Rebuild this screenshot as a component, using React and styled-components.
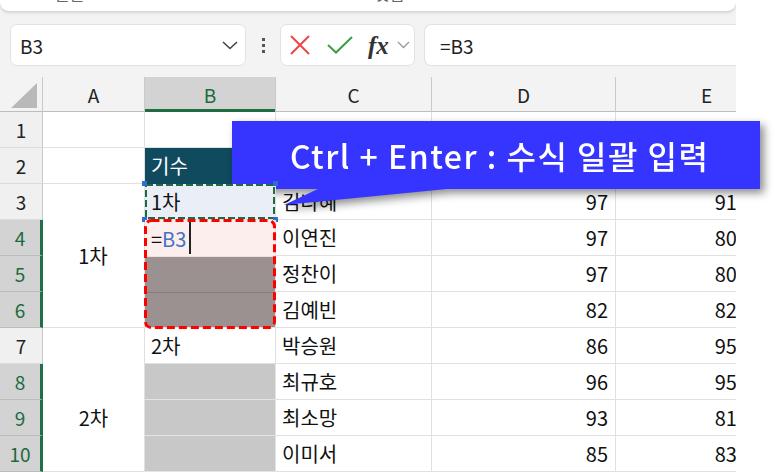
import React from 'react';
import styled, { createGlobalStyle } from 'styled-components';

const GlobalStyle = createGlobalStyle`
  html, body {
    margin: 0;
    padding: 0;
    background: #fff;
  }
  body {
    font-family: "Noto Sans CJK KR", "Noto Sans", sans-serif;
    overflow: hidden;
  }
`;

const Page = styled.div`
  position: relative;
  width: 778px;
  height: 472px;
  overflow: hidden;
  background: #fff;
`;

const Excel = styled.div`
  width: 736px;
  height: 472px;
  background: #f3f3f3;
  overflow: hidden;
  display: flex;
  flex-direction: column;
`;

const RibbonEdge = styled.div`
  position: relative;
  z-index: 1;
  flex: none;
  height: 11px;
  background: #fff;
  border-radius: 0 0 9px 9px;
  box-shadow: 0 2px 3px rgba(0, 0, 0, 0.13);
  overflow: hidden;
  display: flex;
  align-items: flex-start;
`;

RibbonEdge.Label = styled.span`
  margin-top: -16px;
  margin-left: ${(p) => p.$gap}px;
  font-size: 16px;
  line-height: 18px;
  color: #666;
  white-space: nowrap;
`;

const FormulaBar = styled.div`
  flex: none;
  display: flex;
  align-items: center;
  height: 42px;
  margin-top: 13px;
  padding-left: 10px;
`;

const NameBox = styled.div`
  box-sizing: border-box;
  width: 236px;
  height: 42px;
  background: #fff;
  border: 1px solid #e2e2e2;
  border-radius: 7px;
  display: flex;
  align-items: center;
  justify-content: space-between;
  padding: 0 7px 0 9px;
  font-size: 19px;
  color: #222;
`;

const Dots = styled.div`
  width: 34px;
  display: flex;
  flex-direction: column;
  align-items: center;
  gap: 3px;

  span {
    width: 3px;
    height: 3px;
    background: #555;
  }
`;

const FxBox = styled.div`
  box-sizing: border-box;
  width: 135px;
  height: 42px;
  background: #fff;
  border: 1px solid #e2e2e2;
  border-radius: 7px;
  display: flex;
  align-items: center;
  padding-left: 9px;
`;

const FxLabel = styled.span`
  font-family: "Liberation Serif", serif;
  font-style: italic;
  font-weight: bold;
  font-size: 25px;
  color: #333;
  margin-left: 15px;
  line-height: 1;
`;

const FormulaInput = styled.div`
  box-sizing: border-box;
  flex: 1;
  height: 42px;
  margin-left: 9px;
  background: #fff;
  border: 1px solid #e2e2e2;
  border-right: none;
  border-radius: 7px 0 0 7px;
  display: flex;
  align-items: center;
  padding-left: 15px;
  font-size: 19px;
  color: #222;
`;

const HeaderGap = styled.div`
  flex: none;
  height: 11px;
`;

const Sheet = styled.div`
  flex: none;
  display: grid;
  grid-template-columns: 43px 102px 131px 156px 184px 182px;
  grid-template-rows: 35px repeat(10, 36px);
  background: #fff;
`;

const Corner = styled.div`
  background: #f3f3f3;
  border-right: 1px solid #c9c9c9;
  box-shadow: inset 0 -1px 0 #bdbdbd;
  display: flex;
  align-items: flex-end;
  justify-content: flex-end;
  padding: 0 5px 4px 0;
`;

const ColHead = styled.div`
  box-sizing: border-box;
  display: flex;
  align-items: center;
  justify-content: center;
  background: ${(p) => (p.$active ? '#d3d3d3' : '#f3f3f3')};
  color: ${(p) => (p.$active ? '#1d6a40' : '#222')};
  border-right: 1px solid #c9c9c9;
  box-shadow: ${(p) => (p.$active ? 'inset 0 -3px 0 #1e6e42' : 'inset 0 -1px 0 #bdbdbd')};
  font-size: 19px;
`;

const RowHead = styled.div`
  box-sizing: border-box;
  display: flex;
  align-items: center;
  justify-content: center;
  background: ${(p) => (p.$active ? '#d3d3d3' : '#f0f0f0')};
  color: ${(p) => (p.$active ? '#1d6a40' : '#222')};
  border-bottom: 1px solid ${(p) => (p.$active ? '#bcbcbc' : '#dadada')};
  border-right: ${(p) => (p.$active ? '3px solid #1e7145' : '1px solid #c9c9c9')};
  font-size: 19px;
`;

const Cell = styled.div`
  position: relative;
  box-sizing: border-box;
  grid-row: span ${(p) => p.$span || 1};
  display: flex;
  align-items: center;
  justify-content: ${(p) =>
    p.$align === 'right' ? 'flex-end' : p.$align === 'center' ? 'center' : 'flex-start'};
  padding: ${(p) => p.$pad || '0 7px 0 6px'};
  background: ${(p) => p.$bg || '#fff'};
  color: ${(p) => p.$color || '#111'};
  border-right: 1px solid ${(p) => p.$line || '#e0e0e0'};
  border-bottom: 1px solid ${(p) => p.$line || '#e0e0e0'};
  font-size: 20px;
  white-space: nowrap;
  overflow: ${(p) => (p.$clip ? 'hidden' : 'visible')};
`;

const CopySource = styled(Cell)`
  z-index: 2;
`;

const Handle = styled.span`
  position: absolute;
  width: 5px;
  height: 5px;
  background: #2f6fd4;
  ${(p) => (p.$top ? 'top: -3px;' : 'bottom: -3px;')}
  ${(p) => (p.$left ? 'left: -3px;' : 'right: -3px;')}
`;

const Overlay = styled.svg`
  position: absolute;
  inset: ${(p) => p.$inset || 0}px;
  width: calc(100% - ${(p) => 2 * (p.$inset || 0)}px);
  height: calc(100% - ${(p) => 2 * (p.$inset || 0)}px);
  overflow: visible;
  pointer-events: none;
`;

const FillRange = styled.div`
  position: relative;
  z-index: 2;
  grid-row: span 3;
  display: grid;
  grid-template-rows: 37px 36px 1fr;
  border-right: 1px solid #e0e0e0;
`;

const RangeCell = styled.div`
  box-sizing: border-box;
  display: flex;
  align-items: center;
  padding-left: 6px;
  background: ${(p) => p.$bg};
  border-bottom: 1px solid ${(p) => p.$line};
  font-size: 20px;
  color: #111;
`;

const Ref = styled.span`
  color: #4472c4;
`;

const Caret = styled.span`
  display: inline-block;
  width: 2px;
  height: 32px;
  margin-left: 3px;
  background: #222;
`;

const Callout = styled.div`
  position: absolute;
  left: 232px;
  top: 121px;
  width: 528px;
  height: 68px;
  filter: drop-shadow(4px 4px 4px rgba(0, 0, 0, 0.45));
`;

Callout.Box = styled.div`
  height: 100%;
  background: #3535ff;
  display: flex;
  align-items: center;
  padding-left: 58px;
  color: #fff;
  font-size: 32px;
  font-weight: 500;
  letter-spacing: 1.5px;
  white-space: nowrap;
`;

Callout.Tail = styled.svg`
  position: absolute;
  left: 0;
  top: 67px;
`;

const names = [
  ['김나혜', 97, '910'],
  ['이연진', 97, '800'],
  ['정찬이', 97, '800'],
  ['김예빈', 82, '820'],
  ['박승원', 86, '950'],
  ['최규호', 96, '950'],
  ['최소망', 93, '810'],
  ['이미서', 85, '830'],
];

const activeRows = [4, 5, 6, 8, 9, 10];

function Scores({ row }) {
  const [name, d, e] = names[row - 3];
  return (
    <>
      <Cell $clip>{name}</Cell>
      <Cell $align="right">{d}</Cell>
      <Cell $align="right" $pad="0 49px 0 0">{e}</Cell>
    </>
  );
}

function App() {
  return (
    <Page>
      <GlobalStyle />
      <Excel>
        <RibbonEdge>
          <RibbonEdge.Label $gap={55}>글꼴</RibbonEdge.Label>
          <RibbonEdge.Label $gap={88}>ㅡ</RibbonEdge.Label>
          <RibbonEdge.Label $gap={188}>맞춤</RibbonEdge.Label>
          <RibbonEdge.Label $gap={200}>ㅡ</RibbonEdge.Label>
        </RibbonEdge>

        <FormulaBar>
          <NameBox>
            B3
            <svg width="16" height="10" viewBox="0 0 16 10">
              <polyline points="1,2 8,8.5 15,2" fill="none" stroke="#444" strokeWidth="1.6" />
            </svg>
          </NameBox>
          <Dots>
            <span />
            <span />
            <span />
          </Dots>
          <FxBox>
            <svg width="20" height="20" viewBox="0 0 20 20">
              <line x1="1" y1="1" x2="19" y2="19" stroke="#ee4545" strokeWidth="2" />
              <line x1="19" y1="1" x2="1" y2="19" stroke="#ee4545" strokeWidth="2" />
            </svg>
            <svg width="26" height="18" viewBox="0 0 26 18" style={{ marginLeft: 17 }}>
              <polyline points="1,9 9,16.5 25,1" fill="none" stroke="#3c9f48" strokeWidth="2" />
            </svg>
            <FxLabel>fx</FxLabel>
            <svg width="13" height="8" viewBox="0 0 13 8" style={{ marginLeft: 8 }}>
              <polyline points="1,1 6.5,6.5 12,1" fill="none" stroke="#9a9a9a" strokeWidth="1.3" />
            </svg>
          </FxBox>
          <FormulaInput>=B3</FormulaInput>
        </FormulaBar>

        <HeaderGap />

        <Sheet>
          <Corner>
            <svg width="26" height="25" viewBox="0 0 26 25">
              <polygon points="26,0 26,25 0,25" fill="#b9b9b9" />
            </svg>
          </Corner>
          <ColHead>A</ColHead>
          <ColHead $active>B</ColHead>
          <ColHead>C</ColHead>
          <ColHead>D</ColHead>
          <ColHead>E</ColHead>

          {/* row 1 */}
          <RowHead>1</RowHead>
          <Cell />
          <Cell />
          <Cell />
          <Cell />
          <Cell />

          {/* row 2 */}
          <RowHead>2</RowHead>
          <Cell />
          <Cell $bg="#0f4a5f" $color="#fff" $line="#0f4a5f">기수</Cell>
          <Cell />
          <Cell />
          <Cell />

          {/* row 3 */}
          <RowHead>3</RowHead>
          <Cell $span={4} $align="center">1차</Cell>
          <CopySource $bg="#e9eef7">
            1차
            <Overlay>
              <rect
                x="1"
                y="1"
                width="calc(100% - 2px)"
                height="calc(100% - 2px)"
                fill="none"
                stroke="#1d6b3f"
                strokeWidth="2"
                strokeDasharray="7 3"
              />
            </Overlay>
            <Handle $top $left />
            <Handle $top />
            <Handle $left />
            <Handle />
          </CopySource>
          <Scores row={3} />

          {/* rows 4 - 6 */}
          <RowHead $active>4</RowHead>
          <FillRange>
            <RangeCell $bg="#fdeeee" $line="#f1dede">
              =<Ref>B3</Ref>
              <Caret />
            </RangeCell>
            <RangeCell $bg="#9b9190" $line="#847b7a" />
            <RangeCell $bg="#9b9190" $line="#e0e0e0" />
            <Overlay $inset={-1}>
              <rect
                x="1.5"
                y="1.5"
                width="calc(100% - 3px)"
                height="calc(100% - 3px)"
                rx="6"
                fill="none"
                stroke="#ff0000"
                strokeWidth="3"
                strokeDasharray="8 4"
              />
            </Overlay>
          </FillRange>
          <Scores row={4} />
          <RowHead $active>5</RowHead>
          <Scores row={5} />
          <RowHead $active>6</RowHead>
          <Scores row={6} />

          {/* row 7 */}
          <RowHead>7</RowHead>
          <Cell $span={4} $align="center" $pad="36px 0 0 0">2차</Cell>
          <Cell>2차</Cell>
          <Scores row={7} />

          {/* rows 8 - 10 */}
          {[8, 9, 10].map((r) => (
            <React.Fragment key={r}>
              <RowHead $active={activeRows.includes(r)}>{r}</RowHead>
              <Cell $bg="#c8c8c8" $line="#e4e4e4" />
              <Scores row={r} />
            </React.Fragment>
          ))}
        </Sheet>
      </Excel>

      <Callout>
        <Callout.Box>Ctrl + Enter : 수식 일괄 입력</Callout.Box>
        <Callout.Tail width="240" height="20" viewBox="0 0 240 20">
          <polygon points="88,0 225,0 52,17" fill="#3535ff" />
        </Callout.Tail>
      </Callout>
    </Page>
  );
}

export default App;
